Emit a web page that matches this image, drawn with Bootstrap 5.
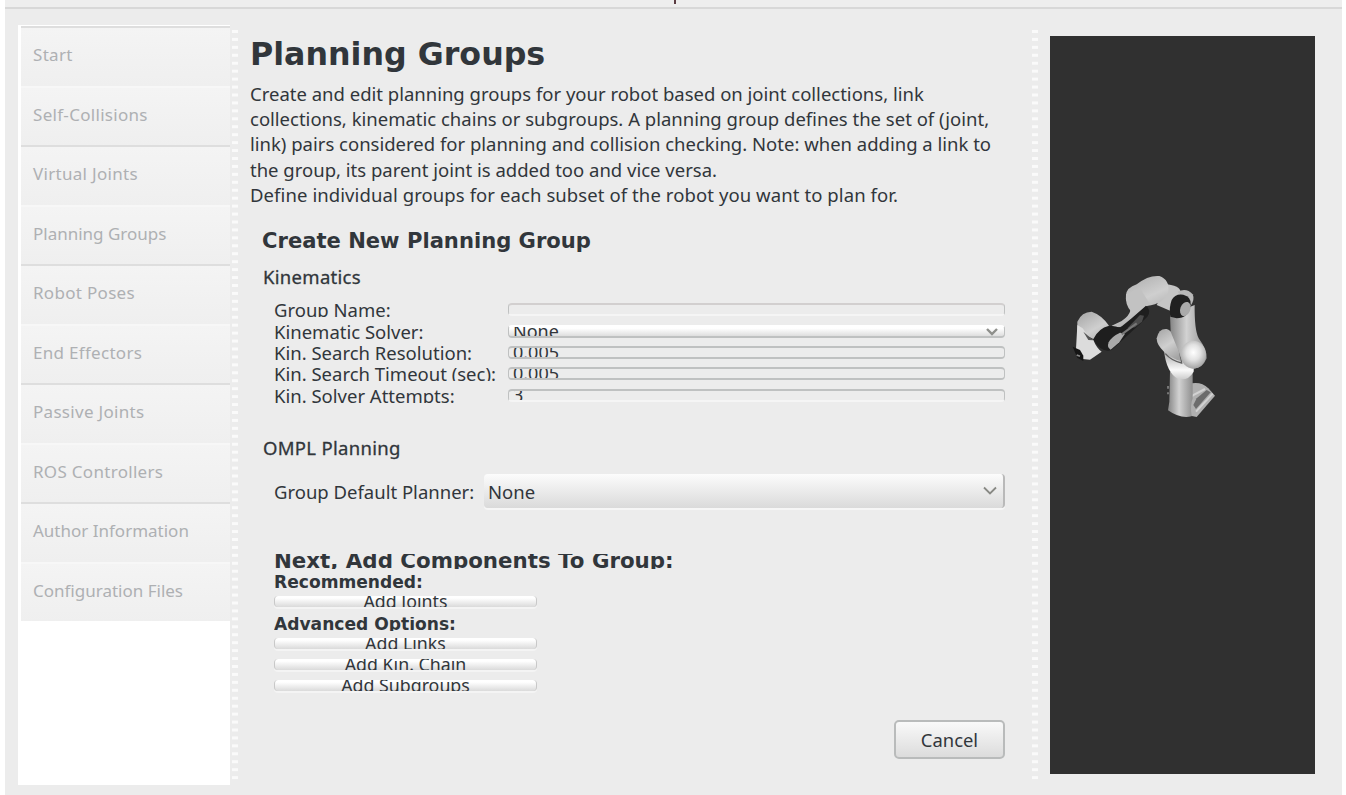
<!DOCTYPE html>
<html lang="en">
<head>
<meta charset="utf-8">
<title>Planning Groups</title>
<link href="https://cdn.jsdelivr.net/npm/bootstrap@5.3.0/dist/css/bootstrap.min.css" rel="stylesheet">
<style>
  body { font-family: "Noto Sans", sans-serif; font-size: 18.5px; line-height: 25.2px; color: #31363b; background: #fff; }
  .app-window { width: 1337px; height: 795px; margin-left: 5px; background: #ececec; }
  .title-strip { height: 9px; border-bottom: 2px solid #d8d8d8; background: #eeeeee; }
  .title-tail { width: 2px; height: 4px; margin-left: 669px; background: #5b3c42; }
  .workspace { height: 786px; padding-left: 13px; }

  .side-nav { width: 212px; height: 760px; margin-top: 16px; padding: 1px 0 0 3px; background: #fff; }
  .side-nav .list-group-item { height: 59.55px; padding: 0 0 0 12px; border: 0; border-top: 2px solid #f7f7f7; font-size: 17px; line-height: 54px; color: #aeb0b3; background: linear-gradient(#f4f4f4, #efefef); }
  .side-nav .list-group-item:nth-child(odd) { border-top-color: #dedede; }
  .side-nav .spaced { letter-spacing: .3px; }

  .splitter { width: 6px; height: 750px; margin: 21px 0 0 2px; background: linear-gradient(#fafafa 3px, transparent 3px) 0 0 / 6px 7.95px; }
  .splitter-right { margin-left: 27px; }

  .editor { width: 755px; margin-left: 12px; }
  .page-title { height: 52px; margin-top: 20px; font: bold 31.7px/50px "DejaVu Sans", sans-serif; }
  .intro-line { height: 25.2px; white-space: nowrap; }
  .intro-last { letter-spacing: .09px; }
  .section-title { font: bold 21.1px/30px "DejaVu Sans", sans-serif; margin: 19px 0 0 12px; white-space: nowrap; }
  .group-title { margin: 8px 0 0 13px; letter-spacing: .3px; -webkit-text-stroke: .3px currentColor; }
  .group-title.lower { margin-top: 25px; }
  .form-grid { margin: 14px 0 0 24px; }
  .form-line { height: 21.4px; white-space: nowrap; }
  .form-line .line-label { width: 234px; height: 14px; line-height: 13px; overflow: hidden; }
  .thin-field { width: 497px; height: 13px; padding: 0 4px; border: 2px solid #bfc1c1; border-left-width: 1.5px; border-right-width: 1.5px; border-radius: 4px; line-height: 9px; overflow: hidden; font-size: 18px; }
  .thin-field.open-end { border-bottom-color: #f5f5f5; }
  .thin-field.pale { border-top-color: #d2cfcf; }
  .thin-combo { border-top-color: #fff; background: linear-gradient(#fff 15%, #dedede); }
  .planner-row { margin: 14px 0 0 24px; }
  .planner-label { width: 210px; }
  .planner-combo { width: 521px; height: 34px; padding: 0 5px 0 4px; border: 0 solid #b9b9b9; border-right-width: 2px; border-radius: 4px; background: linear-gradient(#fcfcfc, #dadada); box-shadow: 0 2px 0 #f6f6f6; }

  .components { margin: 46px 0 0 24px; }
  .next-title { height: 15px; overflow: hidden; font: bold 21.35px/14px "DejaVu Sans", sans-serif; white-space: nowrap; }
  .sub-title { height: 14px; margin-top: 6px; overflow: hidden; font: bold 17.1px/14px "DejaVu Sans", sans-serif; }
  .thin-btn { width: 263px; height: 11px; padding: 0; border: 0 solid #c8c8c8; border-width: 0 1px; border-radius: 4px; font-size: 17.8px; line-height: 11px; overflow: hidden; text-align: center; color: #31363b; background: linear-gradient(#fff 20%, #dadada); box-shadow: 0 2px 0 #f4f4f4; }
  .sub-title + .thin-btn { margin-top: 7px; }
  .thin-btn + .thin-btn, .thin-btn + .sub-title { margin-top: 10px; }
  .cancel-btn { width: 111px; height: 39px; padding: 0; margin-top: 29px; border: 2px solid #b9bbbb; border-radius: 5px; font-size: 18.4px; line-height: 34px; color: #31363b; background: linear-gradient(#f9f9f9, #dcdcdc); }

  .scene { width: 265px; height: 738px; margin: 27px 0 0 12px; padding-top: 219px; background: #303030; }
</style>
</head>
<body>
<div class="app-window overflow-hidden">
  <header class="title-strip"><div class="title-tail"></div></header>
  <main class="workspace d-flex align-items-start">
    <nav class="side-nav list-group rounded-0 flex-shrink-0">
      <a class="list-group-item rounded-0 spaced">Start</a>
      <a class="list-group-item spaced">Self-Collisions</a>
      <a class="list-group-item spaced">Virtual Joints</a>
      <a class="list-group-item">Planning Groups</a>
      <a class="list-group-item spaced">Robot Poses</a>
      <a class="list-group-item spaced">End Effectors</a>
      <a class="list-group-item spaced">Passive Joints</a>
      <a class="list-group-item spaced">ROS Controllers</a>
      <a class="list-group-item">Author Information</a>
      <a class="list-group-item rounded-0">Configuration Files</a>
    </nav>
    <div class="splitter flex-shrink-0"></div>

    <section class="editor flex-shrink-0">
      <h1 class="page-title mb-0">Planning Groups</h1>
      <div class="intro-line">Create and edit planning groups for your robot based on joint collections, link</div>
      <div class="intro-line">collections, kinematic chains or subgroups. A planning group defines the set of (joint,</div>
      <div class="intro-line">link) pairs considered for planning and collision checking. Note: when adding a link to</div>
      <div class="intro-line">the group, its parent joint is added too and vice versa.</div>
      <div class="intro-line intro-last">Define individual groups for each subset of the robot you want to plan for.</div>

      <h2 class="section-title">Create New Planning Group</h2>
      <div class="group-title">Kinematics</div>
      <div class="form-grid">
        <div class="form-line d-flex"><div class="line-label">Group Name:</div><div class="thin-field open-end pale"></div></div>
        <div class="form-line d-flex"><div class="line-label">Kinematic Solver:</div>
          <div class="thin-field thin-combo d-flex justify-content-between"><span>None</span>
            <svg width="16" height="9" viewBox="0 0 16 9"><path d="M3 2 8 7l5-5" fill="none" stroke="#8e8f8b" stroke-width="2.4"/></svg></div></div>
        <div class="form-line d-flex"><div class="line-label">Kin. Search Resolution:</div><div class="thin-field">0.005</div></div>
        <div class="form-line d-flex"><div class="line-label">Kin. Search Timeout (sec):</div><div class="thin-field">0.005</div></div>
        <div class="form-line d-flex"><div class="line-label">Kin. Solver Attempts:</div><div class="thin-field open-end">3</div></div>
      </div>

      <div class="group-title lower">OMPL Planning</div>
      <div class="planner-row d-flex align-items-center">
        <div class="planner-label">Group Default Planner:</div>
        <div class="planner-combo d-flex align-items-center justify-content-between"><span>None</span>
          <svg width="16" height="10" viewBox="0 0 16 10"><path d="M2 1.5 8 7.5l6-6" fill="none" stroke="#888984" stroke-width="1.8"/></svg></div>
      </div>

      <div class="components">
        <div class="next-title">Next, Add Components To Group:</div>
        <div class="sub-title">Recommended:</div>
        <button class="thin-btn d-block">Add Joints</button>
        <div class="sub-title">Advanced Options:</div>
        <button class="thin-btn d-block">Add Links</button>
        <button class="thin-btn d-block">Add Kin. Chain</button>
        <button class="thin-btn d-block">Add Subgroups</button>
      </div>
      <div class="d-flex justify-content-end"><button class="cancel-btn">Cancel</button></div>
    </section>

    <div class="splitter splitter-right flex-shrink-0"></div>
    <aside class="scene flex-shrink-0">
      <svg class="d-block" width="190" height="180" viewBox="30 0 570 540">
        <defs>
          <linearGradient id="tube" x1="0" x2="1"><stop offset="0" stop-color="#858585"/><stop offset=".45" stop-color="#d2d2d2"/><stop offset="1" stop-color="#8f8f8f"/></linearGradient>
          <linearGradient id="shell" x1=".2" y1="0" x2=".7" y2="1"><stop offset="0" stop-color="#aaa"/><stop offset=".5" stop-color="#cfcfcf"/><stop offset="1" stop-color="#a2a2a2"/></linearGradient>
          <radialGradient id="ball" cx=".5" cy=".42" r=".62"><stop offset="0" stop-color="#fff"/><stop offset=".45" stop-color="#e2e2e2"/><stop offset="1" stop-color="#9a9a9a"/></radialGradient>
          <linearGradient id="cuff" x1="0" y1="0" x2="0" y2="1"><stop offset="0" stop-color="#999"/><stop offset=".7" stop-color="#fafafa"/><stop offset="1" stop-color="#ccc"/></linearGradient>
        </defs>
        <!-- base -->
        <path d="M455 385Q485 380 505 400L525 422 470 486 440 480Z" fill="#b0b0b0"/>
        <path d="M470 430 500 405 512 412 468 462 460 450Z" fill="#6c6c6c"/>
        <path d="M468 470 518 416M440 440 460 420 495 402" fill="none" stroke="#d2d2d2" stroke-width="6"/>
        <path d="M390 350H458V430Q450 450 455 484Q420 492 384 466L388 440Z" fill="url(#tube)"/>
        <path d="M384 393v8M384 412v6" stroke="#999" stroke-width="4"/>
        <!-- shoulder -->
        <path d="M372 288 Q380 355 415 372 Q445 378 461 350 L462 325 410 280Z" fill="url(#cuff)"/>
        <path d="M350 250Q356 220 380 222Q402 228 420 280L422 318Q395 310 372 290Q350 270 350 250Z" fill="url(#shell)"/>
        <path d="M376 296Q395 318 425 324L416 275" fill="none" stroke="#606060" stroke-width="4"/>
        <path d="M390 180 464 150Q463 225 476 250Q502 285 500 310Q485 345 455 340Q425 325 417 292L392 230Z" fill="url(#tube)"/>
        <ellipse cx="460" cy="299" rx="38" ry="42" fill="url(#ball)"/>
        <!-- elbow -->
        <path d="M382 88Q430 95 420 120L392 168 350 150Z" fill="#c5c5c5"/>
        <path d="M413 110Q440 97 458 118Q466 135 450 155Z" fill="#b8b8b8"/>
        <path d="M395 135Q405 115 430 119Q455 125 452 150Q445 190 410 190L391 185Q386 160 395 135Z" fill="#202020"/>
        <ellipse cx="436" cy="162" rx="15" ry="22" transform="rotate(20 436 162)" fill="#aaa"/>
        <!-- forearm -->
        <path d="M258 120Q260 98 290 88Q325 60 358 63Q390 75 385 110Q375 145 320 153L255 210Q235 222 215 212L245 198Q290 168 258 135Z" fill="url(#shell)"/>
        <path d="M258 118Q254 150 275 172L330 148 300 100Z" fill="#c2c2c2"/>
        <path d="M318 152Q335 165 322 185L300 207 215 285Q185 295 160 255Q170 225 195 215Q220 210 240 218L275 190Z" fill="#1e1e1e"/>
        <path d="M206 262Q214 245 240 233L255 236 238 262 212 284Q200 278 206 262Z" fill="#a9a9a9"/>
        <path d="M262 220 300 180 312 182 306 200 285 217Z" fill="#4b4b4b"/>
        <path d="M245 238 290 205" stroke="#777" stroke-width="6"/>
        <!-- wrist -->
        <path d="M112 200Q125 170 155 170Q185 180 207 212Q175 220 160 252L125 235Q112 270 112 285Z" fill="url(#shell)"/>
        <path d="M112 210 128 220 150 252 160 255Q170 280 185 290L150 314 128 312 108 282Z" fill="#dcdcdc"/>
        <path d="M130 230 160 256 145 255Z" fill="#555"/>
        <path d="M98 275 120 285 130 302 130 318 112 308Z" fill="#151515"/>
        <path d="M110 300 120 304" stroke="#888" stroke-width="5"/>
      </svg>
    </aside>
  </main>
</div>
<script src="https://cdn.jsdelivr.net/npm/bootstrap@5.3.0/dist/js/bootstrap.bundle.min.js"></script>
</body>
</html>
